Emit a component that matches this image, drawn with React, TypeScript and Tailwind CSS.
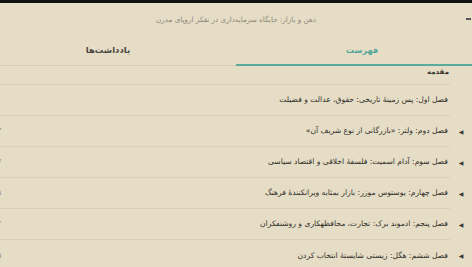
import React from "react";

const rows: { title: string; arrow: boolean; num: string }[] = [
  { title: "فصل اول: پس زمینهٔ تاریخی: حقوق، عدالت و فضیلت", arrow: false, num: "۱" },
  { title: "فصل دوم: ولتر: «بازرگانی از نوع شریف آن»", arrow: true, num: "۳" },
  { title: "فصل سوم: آدام اسمیت: فلسفهٔ اخلاقی و اقتصاد سیاسی", arrow: true, num: "۷" },
  { title: "فصل چهارم: یوستوس موزر: بازار بمثابه ویرانکنندهٔ فرهنگ", arrow: true, num: "۹" },
  { title: "فصل پنجم: ادموند برک: تجارت، محافظهکاری و روشنفکران", arrow: true, num: "۲" },
  { title: "فصل ششم: هگل: زیستی شایستهٔ انتخاب کردن", arrow: true, num: "۵" },
];

export default function App() {
  const font = { fontFamily: '"DejaVu Sans", "Noto Sans", sans-serif' };
  return (
    <div
      dir="rtl"
      style={font}
      className="w-[472px] h-[267px] overflow-hidden bg-[#e6ddc6] flex flex-col"
    >
      <div className="h-[3px] bg-[#111] shrink-0" />
      <div className="h-[34px] shrink-0 flex items-center justify-center relative">
        <span className="text-[7.2px] text-[#8d8879]">ذهن و بازار: جایگاه سرمایه‌داری در تفکر اروپای مدرن</span>
        <span className="absolute right-[1px] top-[15px] w-[5px] h-[1.5px] bg-[#555]" />
      </div>
      <div className="h-[29px] shrink-0 flex">
        <div className="flex-1 flex flex-col">
          <div className="flex-1 flex items-center justify-center pl-[16px] text-[8px] font-bold text-[#4fa596]">فهرست</div>
          <div className="h-[2px] bg-[#5aab9c]" />
        </div>
        <div className="flex-1 flex flex-col">
          <div className="flex-1 flex items-center justify-center pr-[20px] text-[8.5px] font-bold text-[#4a4740]">یادداشت‌ها</div>
          <div className="h-[1px] mt-[1px] bg-[#d5ccb5]" />
        </div>
      </div>
      <div className="h-[19px] shrink-0 flex items-start mr-[22px] pr-[1px] pt-[1px] border-b border-[#d9d0b9]">
        <span className="text-[7px] font-bold text-[#3e3b35]">مقدمه</span>
      </div>
      {rows.map((r, i) => (
        <div key={i} className="h-[31px] shrink-0 flex items-center">
          <div className="w-[22px] shrink-0 flex items-center justify-center text-[6px] text-[#3a3833]">
            {r.arrow ? "◀" : ""}
          </div>
          <div className={`flex-1 h-full flex items-center justify-between ${i < rows.length - 1 ? "border-b border-[#d9d0b9]" : ""}`}>
            <span className="text-[7.6px] text-[#2f2d28] pr-[2px]">{r.title}</span>
            <span className="text-[8px] text-[#8d8879] ml-[-3px]">{r.num}</span>
          </div>
        </div>
      ))}
    </div>
  );
}
